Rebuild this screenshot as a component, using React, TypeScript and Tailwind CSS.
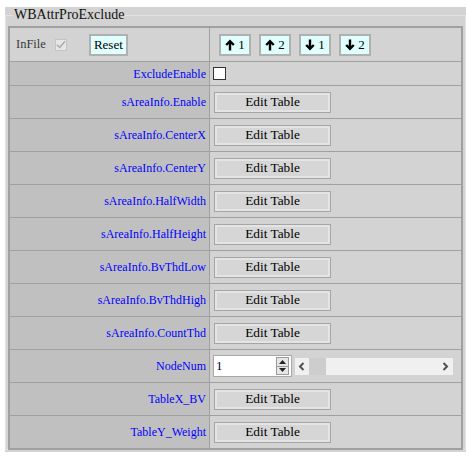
import React from "react";

const serif = { fontFamily: '"Liberation Serif", "Times New Roman", serif' };

const rows = [
  "sAreaInfo.Enable",
  "sAreaInfo.CenterX",
  "sAreaInfo.CenterY",
  "sAreaInfo.HalfWidth",
  "sAreaInfo.HalfHeight",
  "sAreaInfo.BvThdLow",
  "sAreaInfo.BvThdHigh",
  "sAreaInfo.CountThd",
];

function Arrow({ up }: { up: boolean }) {
  return (
    <svg width="10" height="12" viewBox="0 0 10 12" className={up ? "" : "rotate-180"}>
      <path d="M5 11.5V2.5M1.2 6L5 2.2L8.8 6" stroke="#000" strokeWidth="2.4" fill="none" />
    </svg>
  );
}

function MoveBtn({ up, n }: { up: boolean; n: number }) {
  return (
    <button
      style={serif}
      className="w-[32px] h-[22px] border-2 border-[#b0b0b0] bg-[#e0ffff] flex items-center justify-center gap-[3px] text-[13px] leading-none text-black"
    >
      <Arrow up={up} />
      <span>{n}</span>
    </button>
  );
}

function EditBtn() {
  return (
    <button
      style={serif}
      className="w-[117px] h-[21px] border border-[#a5a5a5] bg-[#d6d6d6] shadow-[inset_0_0_0_2px_#e4e4e4] text-[13.33px] leading-none text-black"
    >
      Edit Table
    </button>
  );
}

function Label({ text }: { text: string }) {
  return (
    <div className="bg-[#c0c0c0] flex items-center justify-end pr-[3px] text-[12px] text-[#0000ff]">
      {text}
    </div>
  );
}

export default function App() {
  return (
    <div className="w-[469px] h-[456px] bg-white pt-[7px] pl-[5px]" style={serif}>
      <div className="w-[461px] h-[445px] bg-[#d3d3d3]">
        <fieldset className="border border-[#e2e2e2] px-[2px] pb-[2px] h-[443px]">
          <legend className="ml-[5px] px-[1px] text-[14px] leading-[16px] text-[#111]">WBAttrProExclude</legend>
          <div className="mt-[3px] w-[455px] border-2 border-[#a0a0a0] bg-[#a0a0a0] grid grid-cols-[199px_1fr] gap-px">
            {/* header */}
            <div className="h-[33px] bg-[#d3d3d3] flex items-center pl-[6px] text-[12.5px] text-[#3a3a3a]">
              <span>InFile</span>
              <span className="ml-[9px] w-[12px] h-[12px] border border-[#c4c4c4] bg-[#e6e6e6] flex items-center justify-center">
                <svg width="10" height="9" viewBox="0 0 10 9">
                  <path d="M1 4.8L3.7 7.4L9 1.2" stroke="#a8a8a8" strokeWidth="1.4" fill="none" />
                </svg>
              </span>
              <button
                style={serif}
                className="ml-[22px] w-[39px] h-[22px] border-2 border-[#b0b0b0] bg-[#e0ffff] text-[13px] leading-none text-black"
              >
                Reset
              </button>
            </div>
            <div className="h-[33px] bg-[#d3d3d3] flex items-center pl-[9px] gap-[8px]">
              <MoveBtn up n={1} />
              <MoveBtn up n={2} />
              <MoveBtn up={false} n={1} />
              <MoveBtn up={false} n={2} />
            </div>

            {/* ExcludeEnable */}
            <div className="h-[23px] bg-[#c0c0c0] flex items-center justify-end pr-[3px] text-[12px] text-[#0000ff]">
              ExcludeEnable
            </div>
            <div className="h-[23px] bg-[#d3d3d3] flex items-center pl-[3px]">
              <span className="w-[13px] h-[13px] border border-[#333] bg-white" />
            </div>

            {rows.map((r) => (
              <React.Fragment key={r}>
                <Label text={r} />
                <div className="h-[32px] bg-[#d3d3d3] flex items-center pl-[4px]">
                  <EditBtn />
                </div>
              </React.Fragment>
            ))}

            {/* NodeNum */}
            <Label text="NodeNum" />
            <div className="h-[32px] bg-[#d3d3d3] flex items-center pl-[3px]">
              <div className="w-[79px] h-[22px] border border-[#a9a9a9] bg-white flex items-center">
                <span className="flex-1 pl-[2px] text-[13px] text-[#000033]">1</span>
                <div className="w-[13px] h-[18px] mr-[2px] border border-[#9a9a9a] bg-[#e6e6e6] flex flex-col">
                  <div className="flex-1 flex items-center justify-center border-b border-[#9a9a9a]">
                    <svg width="7" height="4" viewBox="0 0 7 4"><path d="M0 4L3.5 0L7 4Z" fill="#222" /></svg>
                  </div>
                  <div className="flex-1 flex items-center justify-center">
                    <svg width="7" height="4" viewBox="0 0 7 4"><path d="M0 0L3.5 4L7 0Z" fill="#222" /></svg>
                  </div>
                </div>
              </div>
              <div className="ml-[3px] w-[158px] h-[17px] bg-[#f0f0f0] flex items-center">
                <svg width="14" height="17" viewBox="0 0 14 17">
                  <path d="M8.5 5L5 8.5L8.5 12" stroke="#505050" strokeWidth="2" fill="none" />
                </svg>
                <div className="w-[17px] h-[17px] bg-[#cdcdcd]" />
                <div className="flex-1" />
                <svg width="17" height="17" viewBox="0 0 17 17">
                  <path d="M7.5 5L11 8.5L7.5 12" stroke="#505050" strokeWidth="2" fill="none" />
                </svg>
              </div>
            </div>

            <Label text="TableX_BV" />
            <div className="h-[32px] bg-[#d3d3d3] flex items-center pl-[4px]">
              <EditBtn />
            </div>
            <Label text="TableY_Weight" />
            <div className="h-[32px] bg-[#d3d3d3] flex items-center pl-[4px]">
              <EditBtn />
            </div>
          </div>
        </fieldset>
      </div>
    </div>
  );
}
